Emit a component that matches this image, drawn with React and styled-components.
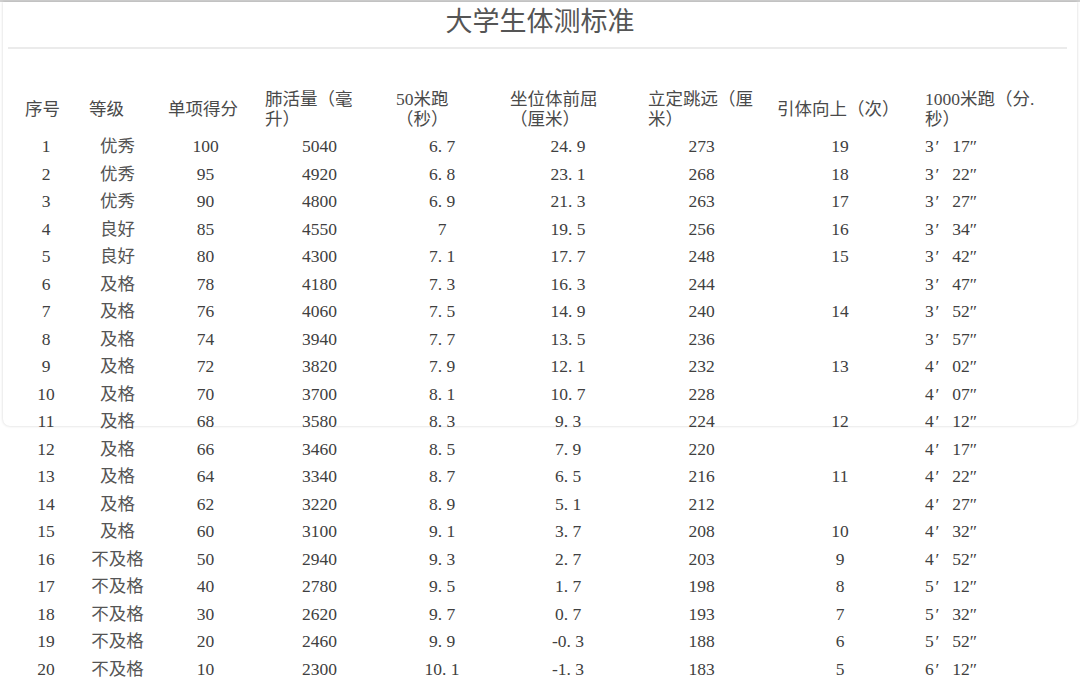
import React from "react";
import styled, { createGlobalStyle } from "styled-components";

const GlobalStyle = createGlobalStyle`
  body {
    margin: 0;
    background: #ffffff;
    font-family: "Liberation Serif", "Noto Sans CJK SC", serif;
    color: #404040;
  }
`;

const colunas = "64px 79px 97px 131px 114px 138px 129px 148px 150px";

const Pagina = styled.div`
  border-top: 2px solid #cfcfcf;
  padding-bottom: 10px;
`;

const Cartao = styled.div`
  position: relative;
  margin: 0 3px;

  &::after {
    content: "";
    position: absolute;
    left: 0;
    right: 0;
    top: 0;
    height: 424px;
    border-radius: 0 0 7px 7px;
    box-shadow: 0 0 3px rgba(0, 0, 0, 0.18);
    pointer-events: none;
  }
`;

const Titulo = styled.h1`
  margin: 0;
  height: 45px;
  line-height: 36px;
  text-align: center;
  font-family: "Noto Sans CJK SC", sans-serif;
  font-size: 27px;
  font-weight: 400;
  color: #555555;
`;

const Divisor = styled.div`
  height: 2px;
  margin: 0 10px 0 5px;
  background: #ebebeb;
`;

const Tabela = styled.div`
  margin: 41px 0 0 22px;
  font-size: 17.5px;
`;

const LinhaCabecalho = styled.div`
  display: grid;
  grid-template-columns: ${colunas};
  height: 39px;
  align-items: center;
  margin-bottom: 4px;
`;

const Cabecalho = styled.div`
  padding-right: ${(p) => p.$pad || 22}px;
  line-height: 19.5px;
  text-align: left;
  line-break: strict;
  color: #4a4a4a;
`;

const Linha = styled.div`
  display: grid;
  grid-template-columns: ${colunas};
  height: 27.5px;
  align-items: center;
  line-height: 27.5px;
`;

const Celula = styled.div`
  text-align: ${(p) => (p.$esquerda ? "left" : "center")};
  padding-right: ${(p) => (p.$esquerda ? 0 : 22)}px;
  white-space: nowrap;
  color: ${(p) => (p.$texto ? "#555555" : "#404040")};
`;

const Ponto = styled.span`
  display: inline-block;
  width: 0.5em;
  text-align: left;
`;

const Minuto = styled.span`
  display: inline-block;
  width: 1.05em;
  padding-left: 0.1em;
  box-sizing: border-box;
  text-align: left;
`;

const cabecalhos = [
  "序号",
  "等级",
  "单项得分",
  "肺活量（毫升）",
  "50米跑（秒）",
  "坐位体前屈（厘米）",
  "立定跳远（厘米）",
  "引体向上（次）",
  "1000米跑（分.秒）",
];

const dados = [
  [1, "优秀", 100, 5040, "6.7", "24.9", 273, 19, "3", "17"],
  [2, "优秀", 95, 4920, "6.8", "23.1", 268, 18, "3", "22"],
  [3, "优秀", 90, 4800, "6.9", "21.3", 263, 17, "3", "27"],
  [4, "良好", 85, 4550, "7", "19.5", 256, 16, "3", "34"],
  [5, "良好", 80, 4300, "7.1", "17.7", 248, 15, "3", "42"],
  [6, "及格", 78, 4180, "7.3", "16.3", 244, "", "3", "47"],
  [7, "及格", 76, 4060, "7.5", "14.9", 240, 14, "3", "52"],
  [8, "及格", 74, 3940, "7.7", "13.5", 236, "", "3", "57"],
  [9, "及格", 72, 3820, "7.9", "12.1", 232, 13, "4", "02"],
  [10, "及格", 70, 3700, "8.1", "10.7", 228, "", "4", "07"],
  [11, "及格", 68, 3580, "8.3", "9.3", 224, 12, "4", "12"],
  [12, "及格", 66, 3460, "8.5", "7.9", 220, "", "4", "17"],
  [13, "及格", 64, 3340, "8.7", "6.5", 216, 11, "4", "22"],
  [14, "及格", 62, 3220, "8.9", "5.1", 212, "", "4", "27"],
  [15, "及格", 60, 3100, "9.1", "3.7", 208, 10, "4", "32"],
  [16, "不及格", 50, 2940, "9.3", "2.7", 203, 9, "4", "52"],
  [17, "不及格", 40, 2780, "9.5", "1.7", 198, 8, "5", "12"],
  [18, "不及格", 30, 2620, "9.7", "0.7", 193, 7, "5", "32"],
  [19, "不及格", 20, 2460, "9.9", "-0.3", 188, 6, "5", "52"],
  [20, "不及格", 10, 2300, "10.1", "-1.3", 183, 5, "6", "12"],
];

const Decimal = ({ valor }) => {
  const partes = valor.split(".");
  if (partes.length < 2) return valor;
  return (
    <>
      {partes[0]}
      <Ponto>.</Ponto>
      {partes[1]}
    </>
  );
};

class App extends React.Component {
  render() {
    const linhas = dados.map((d) => (
      <Linha key={d[0]}>
        <Celula>{d[0]}</Celula>
        <Celula $texto>{d[1]}</Celula>
        <Celula>{d[2]}</Celula>
        <Celula>{d[3]}</Celula>
        <Celula>
          <Decimal valor={d[4]} />
        </Celula>
        <Celula>
          <Decimal valor={d[5]} />
        </Celula>
        <Celula>{d[6]}</Celula>
        <Celula>{d[7]}</Celula>
        <Celula $esquerda>
          {d[8]}
          <Minuto>′</Minuto>
          {d[9]}″
        </Celula>
      </Linha>
    ));

    return (
      <Pagina>
        <GlobalStyle />
        <Cartao>
          <Titulo>大学生体测标准</Titulo>
          <Divisor />
          <Tabela>
            <LinhaCabecalho>
              {cabecalhos.map((c, i) => (
                <Cabecalho key={c} $pad={i === 8 ? 30 : 22}>
                  {c}
                </Cabecalho>
              ))}
            </LinhaCabecalho>
            {linhas}
          </Tabela>
        </Cartao>
      </Pagina>
    );
  }
}

export default App;
